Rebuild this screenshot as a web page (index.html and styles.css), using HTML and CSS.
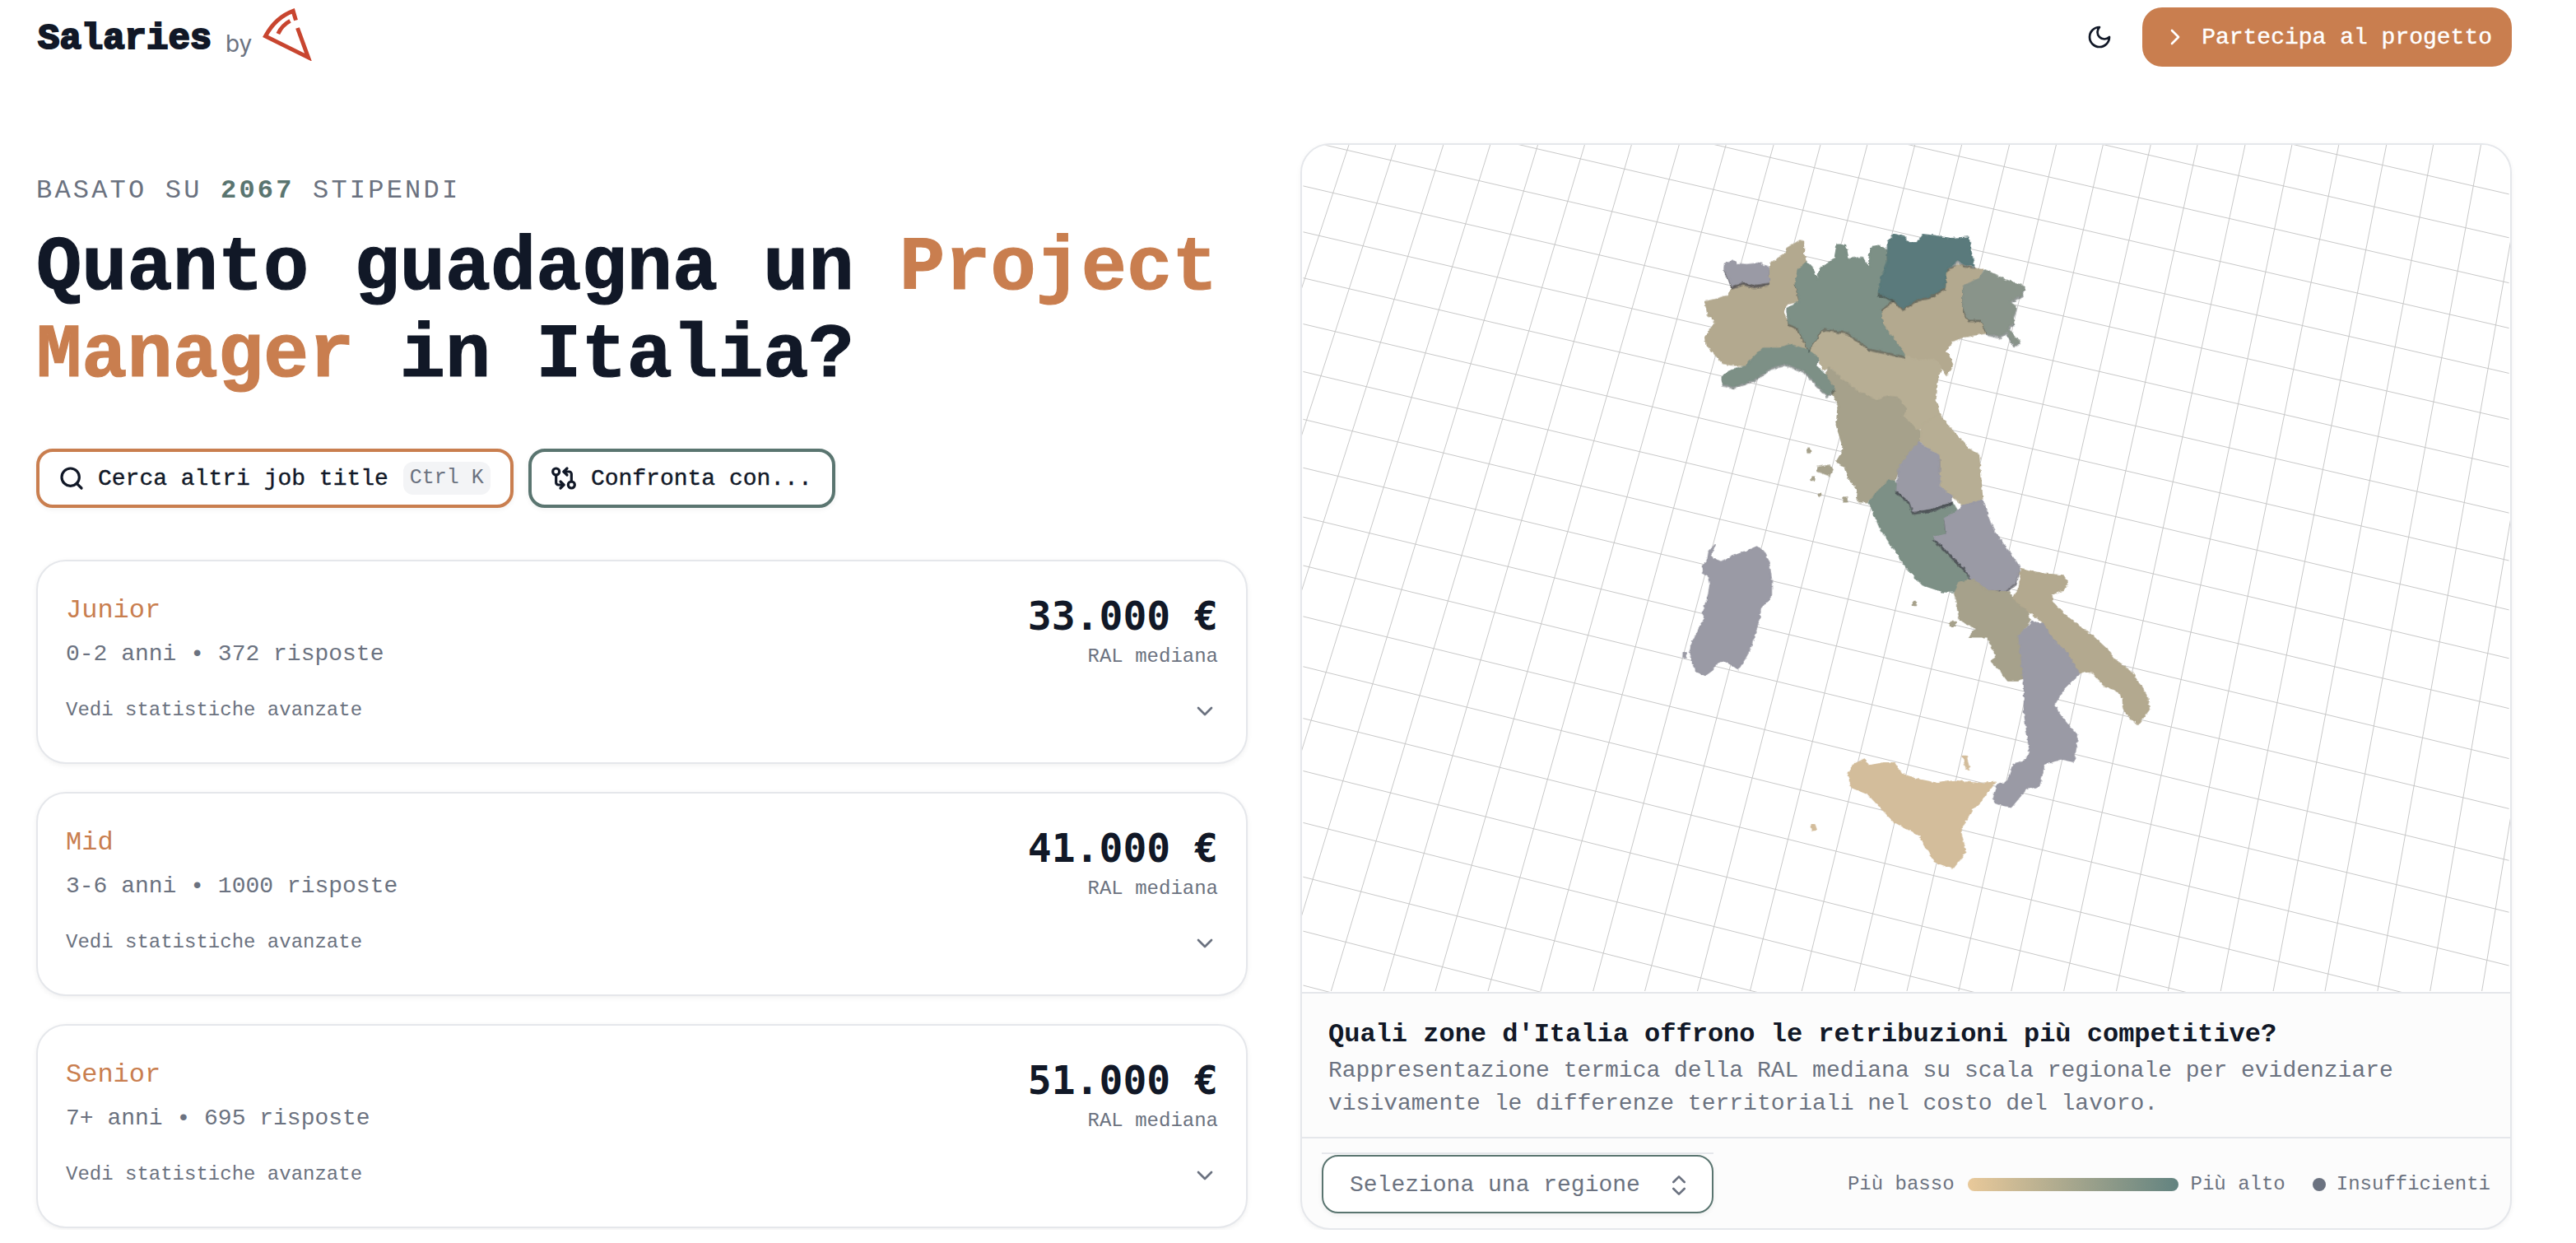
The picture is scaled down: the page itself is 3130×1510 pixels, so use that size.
FILE: index.html
```html
<!DOCTYPE html>
<html lang="it">
<head>
<title>Salaries - Project Manager</title>
<meta charset="utf-8">
<link rel="stylesheet" href="styles.css">
</head>
<body>
<header class="topbar">
	<div class="logo">
		<span class="logo-name">Salaries</span>
		<span class="logo-by">by</span>
		<svg class="logo-pizza" viewBox="170 25 185 195">
			<path d="M297 72 L287 38 Q222 62 186 130 L342 207 L303 100"/>
			<path d="M232 121 Q246 90 276 74"/>
		</svg>
	</div>
	<div class="top-actions">
		<svg class="icon moon" viewBox="0 0 24 24"><path d="M12 3a6 6 0 0 0 9 9 9 9 0 1 1-9-9Z"/></svg>
		<a class="join-btn">
			<svg class="icon" viewBox="0 0 24 24"><path d="m9 18 6-6-6-6"/></svg>
			Partecipa al progetto
		</a>
	</div>
</header>

<main class="layout">
	<section class="left">
		<div class="eyebrow">BASATO SU <b>2067</b> STIPENDI</div>
		<h1>Quanto guadagna un <em>Project</em> <em>Manager</em> in Italia?</h1>
		<div class="actions">
			<a class="act-btn act-search">
				<svg class="icon" viewBox="0 0 24 24"><circle cx="11" cy="11" r="8"/><path d="m21 21-4.3-4.3"/></svg>
				Cerca altri job title
				<kbd>Ctrl K</kbd>
			</a>
			<a class="act-btn act-compare">
				<svg class="icon" viewBox="0 0 24 24"><circle cx="5" cy="6" r="3"/><path d="M12 6h5a2 2 0 0 1 2 2v7"/><path d="m15 9-3-3 3-3"/><circle cx="19" cy="18" r="3"/><path d="M12 18H7a2 2 0 0 1-2-2V9"/><path d="m9 15 3 3-3 3"/></svg>
				Confronta con...
			</a>
		</div>

		<div class="card">
			<div class="card-top">
				<div>
					<div class="card-level">Junior</div>
					<div class="card-sub">0-2 anni • 372 risposte</div>
				</div>
				<div class="card-pay">
					<div class="card-price">33.000 €</div>
					<div class="card-ral">RAL mediana</div>
				</div>
			</div>
			<div class="card-more">
				<span>Vedi statistiche avanzate</span>
				<svg class="icon chev" viewBox="0 0 24 24"><path d="m6 9 6 6 6-6"/></svg>
			</div>
		</div>
		<div class="card">
			<div class="card-top">
				<div>
					<div class="card-level">Mid</div>
					<div class="card-sub">3-6 anni • 1000 risposte</div>
				</div>
				<div class="card-pay">
					<div class="card-price">41.000 €</div>
					<div class="card-ral">RAL mediana</div>
				</div>
			</div>
			<div class="card-more">
				<span>Vedi statistiche avanzate</span>
				<svg class="icon chev" viewBox="0 0 24 24"><path d="m6 9 6 6 6-6"/></svg>
			</div>
		</div>
		<div class="card">
			<div class="card-top">
				<div>
					<div class="card-level">Senior</div>
					<div class="card-sub">7+ anni • 695 risposte</div>
				</div>
				<div class="card-pay">
					<div class="card-price">51.000 €</div>
					<div class="card-ral">RAL mediana</div>
				</div>
			</div>
			<div class="card-more">
				<span>Vedi statistiche avanzate</span>
				<svg class="icon chev" viewBox="0 0 24 24"><path d="m6 9 6 6 6-6"/></svg>
			</div>
		</div>
	</section>

	<section class="panel">
		<svg class="map" viewBox="1582 176 1468 1031">
			<defs>
				<filter id="rough" x="-5%" y="-5%" width="110%" height="110%">
					<feTurbulence type="fractalNoise" baseFrequency=".07" numOctaves="2" seed="4"/>
					<feDisplacementMap in="SourceGraphic" scale="11" xChannelSelector="R" yChannelSelector="G"/>
				</filter>
			</defs>
			<!-- griglia -->
			<path class="grid" d="M1581 175L1234 1206M1638 175L1298 1206M1695 175L1361 1206M1753 175L1425 1206M1810 175L1489 1206M1868 175L1552 1206M1925 175L1616 1206M1982 175L1680 1206M2040 175L1743 1206M2097 175L1807 1206M2155 175L1871 1206M2212 175L1935 1206M2269 175L1998 1206M2327 175L2062 1206M2384 175L2126 1206M2442 175L2189 1206M2499 175L2253 1206M2556 175L2317 1206M2614 175L2380 1206M2671 175L2444 1206M2729 175L2508 1206M2786 175L2572 1206M2843 175L2635 1206M2901 175L2699 1206M2958 175L2763 1206M3016 175L2826 1206M3073 175L2890 1206M3130 175L2954 1206M3188 175L3017 1206M3245 175L3081 1206"/>
			<path class="grid" d="M1582 -102L3050 236M1582 -48L3050 289M1582 6L3050 344M1582 60L3050 399M1582 115L3050 454M1582 170L3050 510M1582 226L3050 568M1582 282L3050 624M1582 338L3050 682M1582 394L3050 742M1582 452L3050 801M1582 510L3050 862M1582 569L3050 923M1582 629L3050 984M1582 688L3050 1047M1582 750L3050 1110M1582 811L3050 1175M1582 874L3050 1240M1582 938L3050 1306M1582 1001L3050 1372M1582 1067L3050 1440M1582 1133L3050 1510M1582 1199L3050 1580"/>
			<!-- nord e centro -->
			<g transform="translate(1950 260) scale(.4464 .3333)" filter="url(#rough)">
				<polygon class="tan" points="530,97 540,100 540,150 548,175 525,205 518,250 530,320 490,330 485,360 500,400 525,415 550,495 520,480 490,490 430,488 400,530 385,555 345,552 320,545 300,515 275,480 272,450 300,395 280,370 272,320 305,310 335,298 345,262 375,248 405,258 445,250 450,180 490,145 495,125"/>
				<polygon class="tan" points="960,185 1030,205 1020,235 975,265 975,340 990,385 1025,385 1040,435 975,450 945,465 930,500 948,555 930,590 915,560 895,530 850,535 818,518 755,400 750,350 785,310 810,345 850,310 885,300 925,270 930,205"/>
				<polygon class="tan-light" points="565,470 590,418 610,420 660,430 720,490 790,510 818,518 850,535 895,530 915,560 905,610 900,680 910,730 880,780 850,790 810,740 820,710 795,670 770,665 740,680 690,650 640,600 615,560 595,570 580,525 550,495"/>
				<polygon class="tan-dark" points="610,560 640,600 690,650 740,680 770,665 795,670 820,710 810,740 850,790 875,800 855,835 830,870 800,930 790,975 770,975 735,1025 715,1055 685,1050 690,1010 665,970 655,925 630,905 650,860 630,770 635,700 600,590"/>
				<polygon class="tan-light" points="865,765 910,730 945,790 985,850 1018,880 1028,1045 975,1065 950,1035 915,1000 910,885 860,835 860,800"/>
				<polygon class="sage lifted" points="430,490 470,490 505,478 550,495 580,525 575,555 600,590 625,640 605,660 540,570 490,545 450,560 410,600 350,630 320,620 318,595 350,565 385,555 400,530"/>
				<polygon class="sage lifted" points="548,175 565,200 578,240 585,200 625,165 632,112 652,112 660,165 700,158 718,195 722,125 745,115 765,130 780,175 750,240 745,290 785,310 750,350 755,400 818,518 790,510 720,490 660,430 610,420 590,418 565,470 555,495 525,415 500,400 495,345 530,320 518,250 525,205"/>
				<polygon class="olive lifted" points="1035,205 1090,240 1143,265 1135,295 1100,320 1120,340 1110,375 1115,395 1095,420 1130,465 1115,480 1095,430 1075,445 1040,435 1025,385 990,385 975,340 975,265 1020,235"/>
				<polygon class="teal lifted" points="770,100 790,75 815,85 825,105 850,105 865,75 900,80 940,90 990,85 995,125 1005,190 980,185 960,170 930,205 925,270 885,300 850,310 810,345 785,310 745,290 750,240 770,175"/>
				<polygon class="grey raised" points="325,182 350,172 360,182 385,185 420,180 445,195 445,250 405,258 375,248 345,262 335,225 325,205"/>
				<polygon class="sage" points="790,975 800,1010 830,1050 840,1095 890,1075 945,1050 960,1085 925,1110 930,1170 900,1180 940,1240 985,1300 990,1330 965,1380 920,1380 865,1355 820,1290 790,1230 750,1150 720,1055 735,1025 770,975"/>
				<polygon class="grey raised" points="855,835 910,885 912,1000 945,1030 945,1050 890,1075 840,1085 830,1050 795,1010 800,930 830,870"/>
				<polygon class="grey raised" points="1028,1045 1060,1160 1130,1290 1120,1340 1090,1375 1045,1375 995,1330 985,1300 940,1240 895,1180 930,1170 925,1110 960,1085 975,1065"/>
				<polygon class="tan-dark" points="577,925 610,918 618,935 610,955 580,940"/>
				<polygon class="tan-dark" points="551,855 558,855 558,872 551,872"/>
				<polygon class="tan-dark" points="562,960 570,960 570,972 562,972"/>
				<polygon class="tan-dark" points="581,1020 587,1020 587,1032 581,1032"/>
				<polygon class="tan-dark" points="650,1037 658,1037 658,1052 650,1052"/>
			</g>
			<!-- sud e isole -->
			<g transform="translate(1980 620) scale(.4464 .3333)" filter="url(#rough)">
				<polygon class="tan-dark" points="900,265 935,255 975,295 1030,300 1045,325 1085,370 1090,405 1060,460 1090,600 1060,625 1030,625 1005,580 985,555 1000,540 975,465 925,465 945,435 900,405 885,305"/>
				<polygon class="tan" points="1065,215 1130,235 1180,240 1195,265 1185,290 1150,310 1150,335 1190,390 1260,460 1300,510 1320,545 1365,590 1410,680 1415,730 1385,785 1350,740 1340,670 1290,640 1260,595 1240,590 1220,600 1205,570 1190,520 1150,470 1125,410 1085,370 1045,325 1065,275"/>
				<polygon class="grey" points="1095,410 1125,415 1150,470 1190,520 1225,600 1180,660 1155,715 1180,760 1220,825 1210,920 1175,910 1130,930 1115,1010 1080,1020 1040,1085 1000,1075 990,1050 1000,1010 1030,990 1045,930 1080,915 1090,880 1075,740 1075,640 1060,460"/>
				<polygon class="sand" points="640,910 650,935 690,925 720,925 740,965 785,985 840,1000 885,990 950,1000 995,995 960,1060 930,1100 900,1170 915,1250 880,1310 830,1285 790,1190 720,1140 650,1040 605,1015 595,970 610,930"/>
				<polygon class="sand" points="495,1150 503,1150 508,1170 498,1172"/>
				<polygon class="sand" points="908,900 916,900 925,950 918,950"/>
				<polygon class="grey" points="232,128 215,155 212,180 200,205 197,228 213,240 218,275 214,310 205,350 197,375 205,395 190,430 175,470 168,490 162,525 170,560 180,590 205,605 225,585 235,560 258,550 275,565 295,582 310,550 325,515 345,430 352,395 355,360 385,315 385,255 378,190 362,150 345,135 320,150 280,170 250,190 225,180 220,160"/>
				<polygon class="grey" points="145,522 153,522 153,538 145,538"/>
				<polygon class="tan-dark" points="873,410 887,410 887,425 873,425"/>
				<polygon class="tan-dark" points="772,338 780,338 780,350 772,350"/>
			</g>
		</svg>
		<div class="panel-text">
			<h2>Quali zone d'Italia offrono le retribuzioni più competitive?</h2>
			<p>Rappresentazione termica della RAL mediana su scala regionale per evidenziare visivamente le differenze territoriali nel costo del lavoro.</p>
		</div>
		<div class="panel-foot">
			<div class="region-select">
				<span>Seleziona una regione</span>
				<svg class="icon" viewBox="0 0 24 24"><path d="m7 15 5 5 5-5"/><path d="m7 9 5-5 5 5"/></svg>
			</div>
			<div class="legend">
				<span>Più basso</span>
				<span class="legend-bar"></span>
				<span>Più alto</span>
				<span class="legend-dot"></span>
				<span>Insufficienti</span>
			</div>
		</div>
	</section>
</main>
</body>
</html>
```

FILE: styles.css
```css
* {
	box-sizing: border-box;
}
body {
	margin: 0;
	padding: 0 78px 0 44px;
	background: #fff;
	color: #111827;
	font-family: "Liberation Mono", "DejaVu Sans Mono", monospace;
}
.icon {
	width: 32px;
	height: 32px;
	flex: none;
	fill: none;
	stroke: currentColor;
	stroke-width: 2;
	stroke-linecap: round;
	stroke-linejoin: round;
}

/* header */
.topbar {
	display: flex;
	justify-content: space-between;
	align-items: flex-start;
	padding-top: 9px;
}
.logo {
	display: flex;
	align-items: flex-start;
	height: 72px;
}
.logo-name {
	margin: 6px 0 0 2px;
	width: 228px;
	font-size: 44px;
	font-weight: 700;
	line-height: 64px;
	-webkit-text-stroke: 2.2px #111827;
}
.logo-by {
	margin-top: 16px;
	width: 43px;
	font-family: Inter, "Noto Sans", sans-serif;
	font-size: 28px;
	line-height: 56px;
	color: #6b7280;
}
.logo-pizza {
	width: 62px;
	height: 65px;
	fill: none;
	stroke: #c8452f;
	stroke-width: 15;
}
.top-actions {
	display: flex;
	align-items: center;
	gap: 36px;
}
.moon {
	color: #111827;
}
.join-btn {
	display: flex;
	align-items: center;
	gap: 16px;
	height: 72px;
	padding: 0 24px;
	border-radius: 24px;
	background: #c97e4f;
	color: #fff;
	font-size: 28px;
	-webkit-text-stroke: .4px #fff;
}

/* colonna sinistra */
.layout {
	display: grid;
	grid-template-columns: 1472px 1472px;
	gap: 64px;
	margin-top: 93px;
}
.left {
	padding-top: 34px;
}
.eyebrow {
	font-size: 32px;
	line-height: 48px;
	letter-spacing: 3.2px;
	color: #6b7280;
}
.eyebrow b {
	color: #5a7570;
}
h1 {
	margin: 18px 0 0;
	font-size: 92px;
	line-height: 106px;
	font-weight: 700;
	-webkit-text-stroke: 1.2px currentColor;
}
h1 em {
	font-style: normal;
	color: #c97e4f;
}
.actions {
	display: flex;
	gap: 18px;
	margin-top: 59px;
}
.act-btn {
	display: flex;
	align-items: center;
	gap: 16px;
	height: 72px;
	padding: 0 24px 0 23px;
	border: 4px solid #c97e4f;
	border-radius: 20px;
	font-size: 28px;
	-webkit-text-stroke: .4px #111827;
	box-shadow: 0 2px 6px rgba(0,0,0,.06);
}
.act-btn .icon {
	stroke-width: 2.4;
}
.act-compare {
	border-color: #5a7570;
	gap: 17px;
}
kbd {
	margin-left: 2px;
	padding: 0 8px;
	height: 40px;
	line-height: 40px;
	border-radius: 12px;
	background: #f3f4f6;
	color: #6b7280;
	font-family: inherit;
	font-size: 25px;
	-webkit-text-stroke: 0;
}
.card {
	height: 248px;
	margin-top: 34px;
	padding: 36px 34px 0;
	border: 2px solid #e5e7eb;
	border-radius: 36px;
	background: #fff;
	box-shadow: 0 2px 6px rgba(0,0,0,.06);
}
.actions + .card {
	margin-top: 63px;
}
.card-top {
	display: flex;
	justify-content: space-between;
}
.card-level {
	font-size: 32px;
	line-height: 48px;
	color: #c97e4f;
}
.card-sub {
	margin-top: 8px;
	font-size: 28px;
	line-height: 42px;
	color: #6b7280;
}
.card-pay {
	text-align: right;
}
.card-price {
	font-family: "DejaVu Sans Mono", "Liberation Mono", monospace;
	font-size: 48px;
	line-height: 60px;
	font-weight: 700;
}
.card-ral {
	margin-top: 4px;
	font-size: 24px;
	line-height: 32px;
	color: #6b7280;
}
.card-more {
	display: flex;
	justify-content: space-between;
	align-items: center;
	margin-top: 28px;
	font-size: 24px;
	color: #6b7280;
}
.chev {
	margin-top: 4px;
}

/* pannello mappa */
.panel {
	display: flex;
	flex-direction: column;
	height: 1320px;
	border: 2px solid #e5e7eb;
	border-radius: 36px;
	overflow: hidden;
	background: #fcfcfc;
	box-shadow: 0 2px 6px rgba(0,0,0,.05);
}
.map {
	display: block;
	width: 100%;
	height: 1031px;
	flex: none;
	background: #fff;
	border-bottom: 2px solid #e5e7eb;
}
.grid {
	fill: none;
	stroke: #c8c8c8;
	stroke-width: 1;
}
.map polygon {
	stroke-width: 4;
	stroke-linejoin: round;
}
.tan { fill: #b3a98f; stroke: #b3a98f; }
.tan-light { fill: #b7ae94; stroke: #b7ae94; }
.tan-dark { fill: #a6a18b; stroke: #a6a18b; }
.sand { fill: #d3bd9b; stroke: #d3bd9b; }
.sage { fill: #7d9086; stroke: #7d9086; }
.olive { fill: #89948a; stroke: #89948a; }
.teal { fill: #5a7a7b; stroke: #5a7a7b; }
.grey { fill: #9a9aa5; stroke: #9a9aa5; }
.lifted { filter: drop-shadow(0 8px 1px rgba(40,50,50,.5)); }
.raised { filter: drop-shadow(0 11px 1px rgba(60,60,70,.7)); }
.panel-text {
	flex: none;
	height: 176px;
	padding: 26px 32px 0;
	border-bottom: 2px solid #e5e7eb;
}
h2 {
	margin: 0;
	font-size: 32px;
	line-height: 48px;
	font-weight: 700;
}
.panel-text p {
	margin: 0;
	font-size: 28px;
	line-height: 40px;
	color: #6b7280;
}
.panel-foot {
	flex: 1;
	display: flex;
	justify-content: space-between;
	align-items: center;
	padding: 2px 24px 0;
}
.region-select {
	position: relative;
	display: flex;
	justify-content: space-between;
	align-items: center;
	width: 476px;
	height: 71px;
	padding: 2px 24px 0 32px;
	border: 2px solid #5a7570;
	border-radius: 20px;
	background: #fff;
	color: #6b7280;
	font-size: 28px;
	box-shadow: 0 2px 6px rgba(0,0,0,.06);
}
.region-select::before {
	content: "";
	position: absolute;
	top: -5px;
	left: -2px;
	right: -2px;
	height: 2px;
	background: #e5e7eb;
}
.legend {
	display: flex;
	align-items: center;
	font-size: 24px;
	color: #6b7280;
}
.legend-bar {
	width: 256px;
	height: 16px;
	margin: 0 15px 0 16px;
	border-radius: 8px;
	background: linear-gradient(90deg, #e9c99a, #628380);
}
.legend-dot {
	width: 16px;
	height: 16px;
	margin: 0 13px 0 33px;
	border-radius: 50%;
	background: #6b7280;
}
```
